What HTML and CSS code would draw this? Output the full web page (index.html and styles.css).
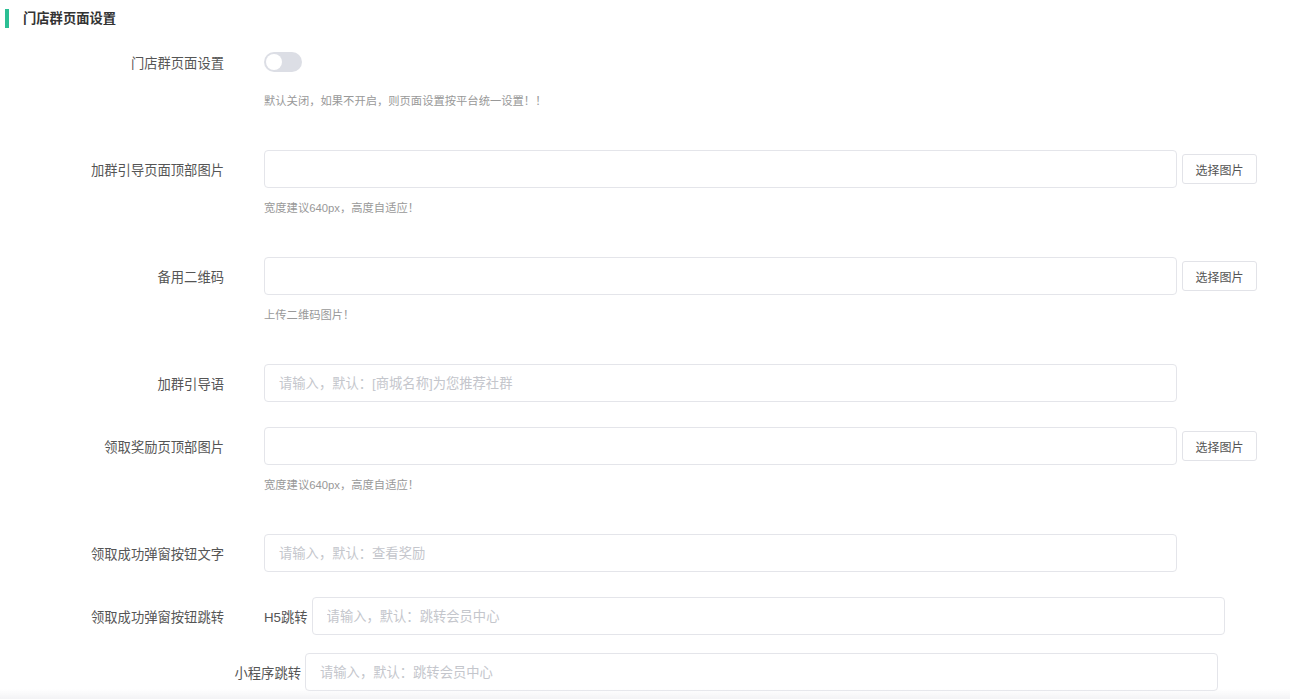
FILE: index.html
```html
<!DOCTYPE html>
<html lang="zh-CN">
<head>
  <meta charset="UTF-8">
  <title>门店群页面设置</title>
  <link rel="stylesheet" href="styles.css">
</head>
<body>
  <div class="panel">
    <div class="panel-title">门店群页面设置</div>

    <form class="form">
      <!-- 开关 -->
      <div class="item">
        <label class="item-label">门店群页面设置</label>
        <div class="item-body">
          <span class="switch"><span class="switch-knob"></span></span>
        </div>
      </div>
      <div class="help">默认关闭，如果不开启，则页面设置按平台统一设置！！</div>

      <!-- 顶部图片 -->
      <div class="item">
        <label class="item-label">加群引导页面顶部图片</label>
        <div class="item-body">
          <input type="text" class="input">
          <button type="button" class="pick-btn">选择图片</button>
        </div>
      </div>
      <div class="help">宽度建议640px，高度自适应！</div>

      <div class="item">
        <label class="item-label">备用二维码</label>
        <div class="item-body">
          <input type="text" class="input">
          <button type="button" class="pick-btn">选择图片</button>
        </div>
      </div>
      <div class="help">上传二维码图片！</div>

      <div class="item item-plain">
        <label class="item-label">加群引导语</label>
        <div class="item-body">
          <input type="text" class="input" placeholder="请输入，默认：[商城名称]为您推荐社群">
        </div>
      </div>

      <div class="item">
        <label class="item-label">领取奖励页顶部图片</label>
        <div class="item-body">
          <input type="text" class="input">
          <button type="button" class="pick-btn">选择图片</button>
        </div>
      </div>
      <div class="help">宽度建议640px，高度自适应！</div>

      <div class="item item-plain">
        <label class="item-label">领取成功弹窗按钮文字</label>
        <div class="item-body">
          <input type="text" class="input" placeholder="请输入，默认：查看奖励">
        </div>
      </div>

      <!-- 跳转 -->
      <div class="item item-tight">
        <label class="item-label">领取成功弹窗按钮跳转</label>
        <div class="item-body">
          <span class="sub-label">H5跳转</span>
          <input type="text" class="input" placeholder="请输入，默认：跳转会员中心">
        </div>
      </div>
      <div class="item item-plain">
        <label class="item-label item-label-wide">小程序跳转</label>
        <div class="item-body">
          <input type="text" class="input" placeholder="请输入，默认：跳转会员中心">
        </div>
      </div>
    </form>
  </div>

  <div class="page-foot"></div>
</body>
</html>
```

FILE: styles.css
```css
body {
  margin: 0;
  background: #fff;
  font-family: "Liberation Sans", "Noto Sans CJK SC", sans-serif;
  color: #333;
}

.panel {
  padding: 9px 0 0 5px;
}

.panel-title {
  border-left: 4px solid #2bbf94;
  padding-left: 14px;
  height: 19px;
  line-height: 19px;
  font-size: 13.3px;
  font-weight: bold;
  color: #333;
  margin-bottom: 15px;
}

.form {
  margin-left: -5px;
}

.item {
  display: flex;
  align-items: center;
  height: 38px;
}

.item-plain {
  margin-bottom: 25px;
}

.item-tight {
  margin-bottom: 18px;
}

.item-label {
  width: 224px;
  padding-right: 40px;
  text-align: right;
  font-size: 13.3px;
  color: #555;
  flex-shrink: 0;
}

.item-label-wide {
  width: 301px;
  padding-right: 4px;
}

.item-body {
  display: flex;
  align-items: center;
}

.input {
  box-sizing: border-box;
  width: 913px;
  height: 38px;
  padding: 0 14px;
  border: 1px solid #e4e5ea;
  border-radius: 4px;
  font-family: inherit;
  font-size: 13.3px;
  color: #333;
  outline: none;
}

.input::placeholder {
  color: #c4c6cc;
}

.pick-btn {
  margin-left: 5px;
  width: 75px;
  height: 30px;
  background: #fff;
  border: 1px solid #e2e3e8;
  border-radius: 3px;
  font-family: inherit;
  font-size: 12px;
  color: #555;
  cursor: pointer;
}

.sub-label {
  font-size: 13.3px;
  color: #555;
  margin-right: 4px;
}

.switch {
  display: inline-block;
  position: relative;
  width: 38px;
  height: 20px;
  border-radius: 10px;
  background: #dcdee5;
}

.switch-knob {
  position: absolute;
  left: 2px;
  top: 2px;
  width: 16px;
  height: 16px;
  border-radius: 50%;
  background: #fff;
}

.help {
  margin: 10px 0 39px 264px;
  line-height: 20px;
  font-size: 11.3px;
  color: #999;
}

.page-foot {
  position: fixed;
  left: 0;
  right: 0;
  bottom: 0;
  height: 10px;
  background: linear-gradient(rgba(245, 245, 247, 0), #f3f3f5);
}
```
